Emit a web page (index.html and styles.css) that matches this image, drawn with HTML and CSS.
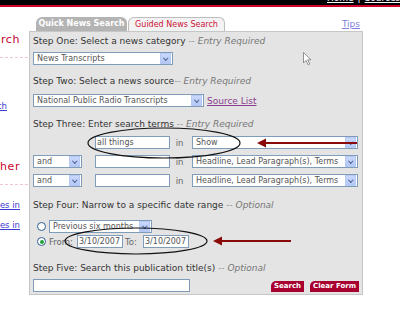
FILE: index.html
```html
<!DOCTYPE html>
<html lang="en">
  <head>
    <meta charset="UTF-8" />
    <title>Guided News Search</title>
    <link rel="stylesheet" href="styles.css">
  </head>
  <body>
    <div class="topbar">
      <ul class="toplinks">
        <li><a href="#">Home</a></li>
        <li class="sep">|</li>
        <li><a href="#">Sources</a></li>
        <li class="sep">|</li>
      </ul>
    </div>
    <div class="redline"></div>

    <div class="main">
      <aside class="sidebar">
        <div class="side-head h1"><span>Search</span></div>
        <div class="side-rule"></div>
        <div class="side-link l1"><a href="#">Power Search</a></div>
        <div class="side-head h2"><span>Other</span></div>
        <div class="side-rule"></div>
        <div class="side-link l2"><a href="#">Sources in</a></div>
        <div class="side-link l3"><a href="#">Sources in</a></div>
      </aside>

      <section class="search">
        <div class="tabs">
          <span class="tab quick">Quick News Search</span>
          <span class="tab guided">Guided News Search</span>
          <a class="tips" href="#">Tips</a>
        </div>

        <form class="panel">
          <div class="step s1">Step One: Select a news category <em>-- Entry Required</em></div>
          <div class="row r1">
            <span class="select w-cat"><span class="value">News Transcripts</span><span class="arrow"></span></span>
          </div>

          <div class="step s2">Step Two: Select a news source<em>-- Entry Required</em></div>
          <div class="row r2">
            <span class="select w-src"><span class="value">National Public Radio Transcripts</span><span class="arrow"></span></span>
            <a class="source-list" href="#">Source List</a>
          </div>

          <div class="step s3">Step Three: Enter search terms <em>-- Entry Required</em></div>
          <div class="row terms t1">
            <span class="bool-gap"></span>
            <input class="text w-term" type="text" value="all things">
            <span class="in">in</span>
            <span class="select w-field"><span class="value">Show</span><span class="arrow"></span></span>
          </div>
          <div class="row terms t2">
            <span class="select w-bool"><span class="value">and</span><span class="arrow"></span></span>
            <input class="text w-term" type="text" value="">
            <span class="in">in</span>
            <span class="select w-field"><span class="value">Headline, Lead Paragraph(s), Terms</span><span class="arrow"></span></span>
          </div>
          <div class="row terms t3">
            <span class="select w-bool"><span class="value">and</span><span class="arrow"></span></span>
            <input class="text w-term" type="text" value="">
            <span class="in">in</span>
            <span class="select w-field"><span class="value">Headline, Lead Paragraph(s), Terms</span><span class="arrow"></span></span>
          </div>

          <div class="step s4">Step Four: Narrow to a specific date range <em>-- Optional</em></div>
          <div class="row date d1">
            <span class="radio"></span>
            <span class="select w-range"><span class="value">Previous six months</span><span class="arrow"></span></span>
          </div>
          <div class="row date d2">
            <span class="radio checked"></span>
            <span class="date-label">From:</span>
            <input class="text w-date" type="text" value="3/10/2007">
            <span class="date-label to">To:</span>
            <input class="text w-date" type="text" value="3/10/2007">
          </div>

          <div class="step s5">Step Five: Search this publication title(s) <em>-- Optional</em></div>
          <div class="row last">
            <input class="text w-title" type="text" value="">
            <span class="buttons">
              <button type="button" class="btn">Search</button>
              <button type="button" class="btn">Clear Form</button>
            </span>
          </div>
        </form>
      </section>
    </div>

    <!-- hand-drawn annotations over the form -->
    <svg class="marks" width="400" height="318" viewBox="0 0 400 318">
      <ellipse cx="164" cy="143" rx="76" ry="15" fill="none" stroke="#111" stroke-width="1.2" />
      <line x1="264" y1="143" x2="357" y2="143" stroke="#8a0a0a" stroke-width="2" />
      <polygon points="257,143 266,138.5 266,147.5" fill="#8a0a0a" />

      <ellipse cx="136" cy="241" rx="71" ry="13" fill="none" stroke="#111" stroke-width="1.2" />
      <line x1="220" y1="241" x2="291" y2="241" stroke="#8a0a0a" stroke-width="2" />
      <polygon points="213,241 222,236.5 222,245.5" fill="#8a0a0a" />

      <path d="M303.5 52.5 V63 L306 60.5 L308.2 64.8 L309.8 64 L307.6 59.8 H311 Z" fill="#fff" stroke="#777" stroke-width="0.8" stroke-linejoin="round" />
    </svg>
  </body>
</html>
```

FILE: styles.css
```css
body {
  margin: 0;
  padding: 0;
  background-color: #fff;
  font-family: "DejaVu Sans", Verdana, sans-serif;
  color: #333;
  position: relative;
  width: 400px;
  height: 318px;
  overflow: hidden;
}
.topbar {
  height: 5px;
  background-color: #000;
  overflow: hidden;
}
.toplinks {
  list-style: none;
  margin: -7px 0 0 0;
  padding: 0 0 0 327px;
  display: flex;
  gap: 4px;
  font-size: 9px;
  line-height: 11px;
}
.toplinks a {
  color: #fff;
}
.toplinks .sep {
  color: #fff;
}
.redline {
  height: 2px;
  background-color: #d4002a;
}
.main {
  display: flex;
}

/* left column, mostly cut off by the window */
.sidebar {
  width: 29px;
  flex-shrink: 0;
  overflow: hidden;
  display: flex;
  flex-direction: column;
}
.side-head,
.side-link {
  display: flex;
  justify-content: flex-end;
  white-space: nowrap;
  line-height: 12px;
  padding-right: 9px;
}
.side-head {
  color: #c8002d;
  font-size: 11px;
  letter-spacing: 0.6px;
}
.side-link {
  font-size: 8.5px;
}
.side-link a {
  color: #3b3bd0;
}
.side-head.h1 {
  margin-top: 27px;
}
.side-rule {
  margin-top: 11px;
  width: 28px;
  border-top: 1px dashed #f2c6ce;
}
.side-link.l1 {
  margin-top: 42px;
  padding-right: 22px;
}
.side-head.h2 {
  margin-top: 49px;
}
.side-link.l2 {
  margin-top: 14px;
}
.side-link.l3 {
  margin-top: 8px;
}

/* tabs */
.search {
  width: 334px;
  flex-shrink: 0;
}
.tabs {
  display: flex;
  align-items: flex-end;
  height: 14px;
  margin-top: 10px;
}
.tab {
  box-sizing: border-box;
  height: 14px;
  line-height: 13px;
  text-align: center;
  font-size: 8px;
  font-weight: bold;
  border-radius: 6px 6px 0 0;
  white-space: nowrap;
}
.tab.quick {
  margin-left: 7px;
  width: 91px;
  background-color: #b4b4b4;
  color: #fff;
}
.tab.guided {
  margin-left: 1px;
  width: 97px;
  background-color: #f3f3f3;
  color: #cc1136;
  border: 1px solid #bdbdbd;
  border-bottom: none;
  font-weight: normal;
}
.tips {
  margin-left: auto;
  margin-right: 3px;
  align-self: center;
  font-size: 9px;
  color: #8080e0;
}

/* search panel */
.panel {
  margin: 0;
  box-sizing: border-box;
  height: 264px;
  background-color: #e4e4e4;
  border: 1px solid #c6c6c6;
  padding: 0 3px;
  display: flex;
  flex-direction: column;
}
.step {
  font-size: 9px;
  line-height: 12px;
  white-space: nowrap;
  color: #333;
}
.step em {
  color: #777;
}
.s1 { margin-top: 3px; }
.r1 { margin-top: 5px; }
.s2 { margin-top: 10px; }
.r2 { margin-top: 7px; }
.s3 { margin-top: 11px; }
.t1 { margin-top: 6px; }
.t2 { margin-top: 6px; }
.t3 { margin-top: 6px; }
.s4 { margin-top: 12px; }
.d1 { margin-top: 9px; }
.d2 { margin-top: 2px; }
.s5 { margin-top: 14px; }
.last { margin-top: 5px; }

.row {
  display: flex;
  align-items: center;
  height: 13px;
}
.select {
  box-sizing: border-box;
  display: flex;
  align-items: center;
  height: 13px;
  background-color: #fff;
  border: 1px solid #7f9db9;
  padding-left: 3px;
  font-size: 8px;
  color: #555;
  white-space: nowrap;
  overflow: hidden;
}
.select .value {
  flex: 1;
  overflow: hidden;
}
.select .arrow {
  position: relative;
  flex-shrink: 0;
  width: 9px;
  height: 9px;
  margin-right: 1px;
  background: linear-gradient(#c9d8fc, #b3c8f6);
  border: 1px solid #b7c9f2;
}
.select .arrow::after {
  content: "";
  position: absolute;
  left: 2.5px;
  top: 1.5px;
  width: 2.5px;
  height: 2.5px;
  border-right: 1.5px solid #4a5f8a;
  border-bottom: 1.5px solid #4a5f8a;
  transform: rotate(45deg);
}
.w-cat { width: 140px; }
.w-src { width: 171px; }
.w-bool { width: 49px; }
.w-field { width: 166px; }
.w-range { width: 103px; }

.source-list {
  margin-left: 3px;
  font-size: 9px;
  color: #8a3c8e;
}
.bool-gap {
  width: 49px;
  flex-shrink: 0;
}
.text {
  box-sizing: border-box;
  height: 13px;
  margin: 0;
  padding: 0 1px;
  border: 1px solid #7f9db9;
  background-color: #fff;
  font-family: "DejaVu Sans", Verdana, sans-serif;
  font-size: 8px;
  color: #555;
  outline: none;
}
.w-term {
  width: 75px;
  margin-left: 13px;
}
.in {
  width: 22px;
  text-align: center;
  font-size: 8.5px;
  color: #666;
  padding-right: 3px;
  box-sizing: border-box;
}

.radio {
  box-sizing: border-box;
  width: 9px;
  height: 9px;
  margin-left: 4px;
  margin-right: 3px;
  border: 1px solid #2a5d8f;
  border-radius: 50%;
  background-color: #fff;
  position: relative;
}
.radio.checked::after {
  content: "";
  position: absolute;
  left: 1.5px;
  top: 1.5px;
  width: 4px;
  height: 4px;
  border-radius: 50%;
  background-color: #22a33a;
}
.date-label {
  font-size: 8.5px;
  color: #666;
  width: 28px;
}
.date-label.to {
  width: 20px;
  padding-left: 2px;
  box-sizing: border-box;
}
.w-date {
  width: 46px;
}
.w-title {
  width: 157px;
}
.buttons {
  margin-left: auto;
  display: flex;
  gap: 6px;
  margin-top: 2px;
}
.btn {
  height: 11px;
  margin: 0;
  padding: 0 3px;
  border: none;
  border-radius: 5px 0 0 0;
  background-color: #a8002f;
  color: #fff;
  font-family: "DejaVu Sans", Verdana, sans-serif;
  font-size: 7px;
  font-weight: bold;
  line-height: 11px;
}

.marks {
  position: absolute;
  left: 0;
  top: 0;
  pointer-events: none;
}
```
